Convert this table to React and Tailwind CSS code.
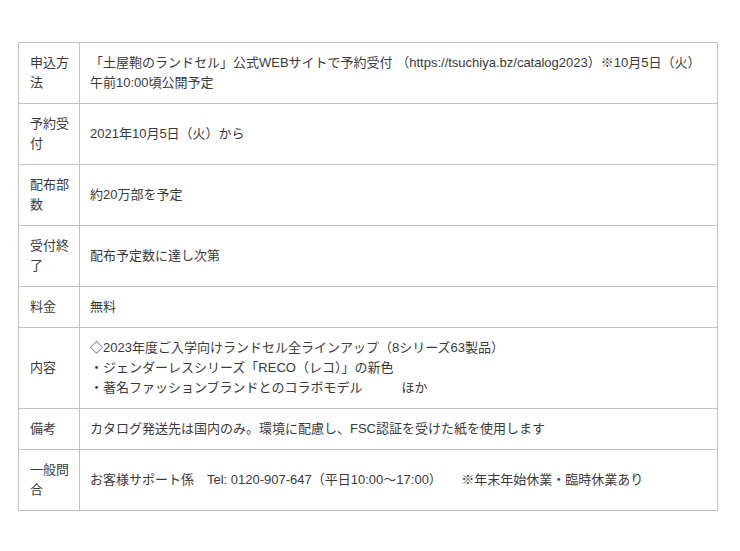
const rows = [
  {
    label: '申込方法',
    body: '「土屋鞄のランドセル」公式WEBサイトで予約受付 （https://tsuchiya.bz/catalog2023）※10月5日（火）午前10:00頃公開予定',
  },
  { label: '予約受付', body: '2021年10月5日（火）から' },
  { label: '配布部数', body: '約20万部を予定' },
  { label: '受付終了', body: '配布予定数に達し次第' },
  { label: '料金', body: '無料' },
  {
    label: '内容',
    body: '◇2023年度ご入学向けランドセル全ラインアップ（8シリーズ63製品）\n・ジェンダーレスシリーズ「RECO（レコ）」の新色\n・著名ファッションブランドとのコラボモデル　　　ほか',
  },
  { label: '備考', body: 'カタログ発送先は国内のみ。環境に配慮し、FSC認証を受けた紙を使用します' },
  {
    label: '一般問合',
    body: 'お客様サポート係　Tel: 0120-907-647（平日10:00～17:00）　　※年末年始休業・臨時休業あり',
  },
];

export default function App() {
  return (
    <div
      className="min-h-screen bg-white pt-[42px] pl-[18px] text-[#3a3a3a] text-[13px] leading-[20px]"
      style={{ fontFamily: '"Liberation Sans", "Noto Sans CJK JP", sans-serif' }}
    >
      <table className="w-[700px] border-collapse border border-[#c2c2c2]">
        <tbody>
          {rows.map((row) => (
            <tr key={row.label} className="border-b border-[#c2c2c2]">
              <td className="w-[61px] border-r border-[#c2c2c2] pl-[11px] pr-[9px] py-[10px] align-middle">
                {row.label}
              </td>
              <td className="px-[10px] py-[10px] align-middle whitespace-pre-wrap">
                {row.body}
              </td>
            </tr>
          ))}
        </tbody>
      </table>
    </div>
  );
}
